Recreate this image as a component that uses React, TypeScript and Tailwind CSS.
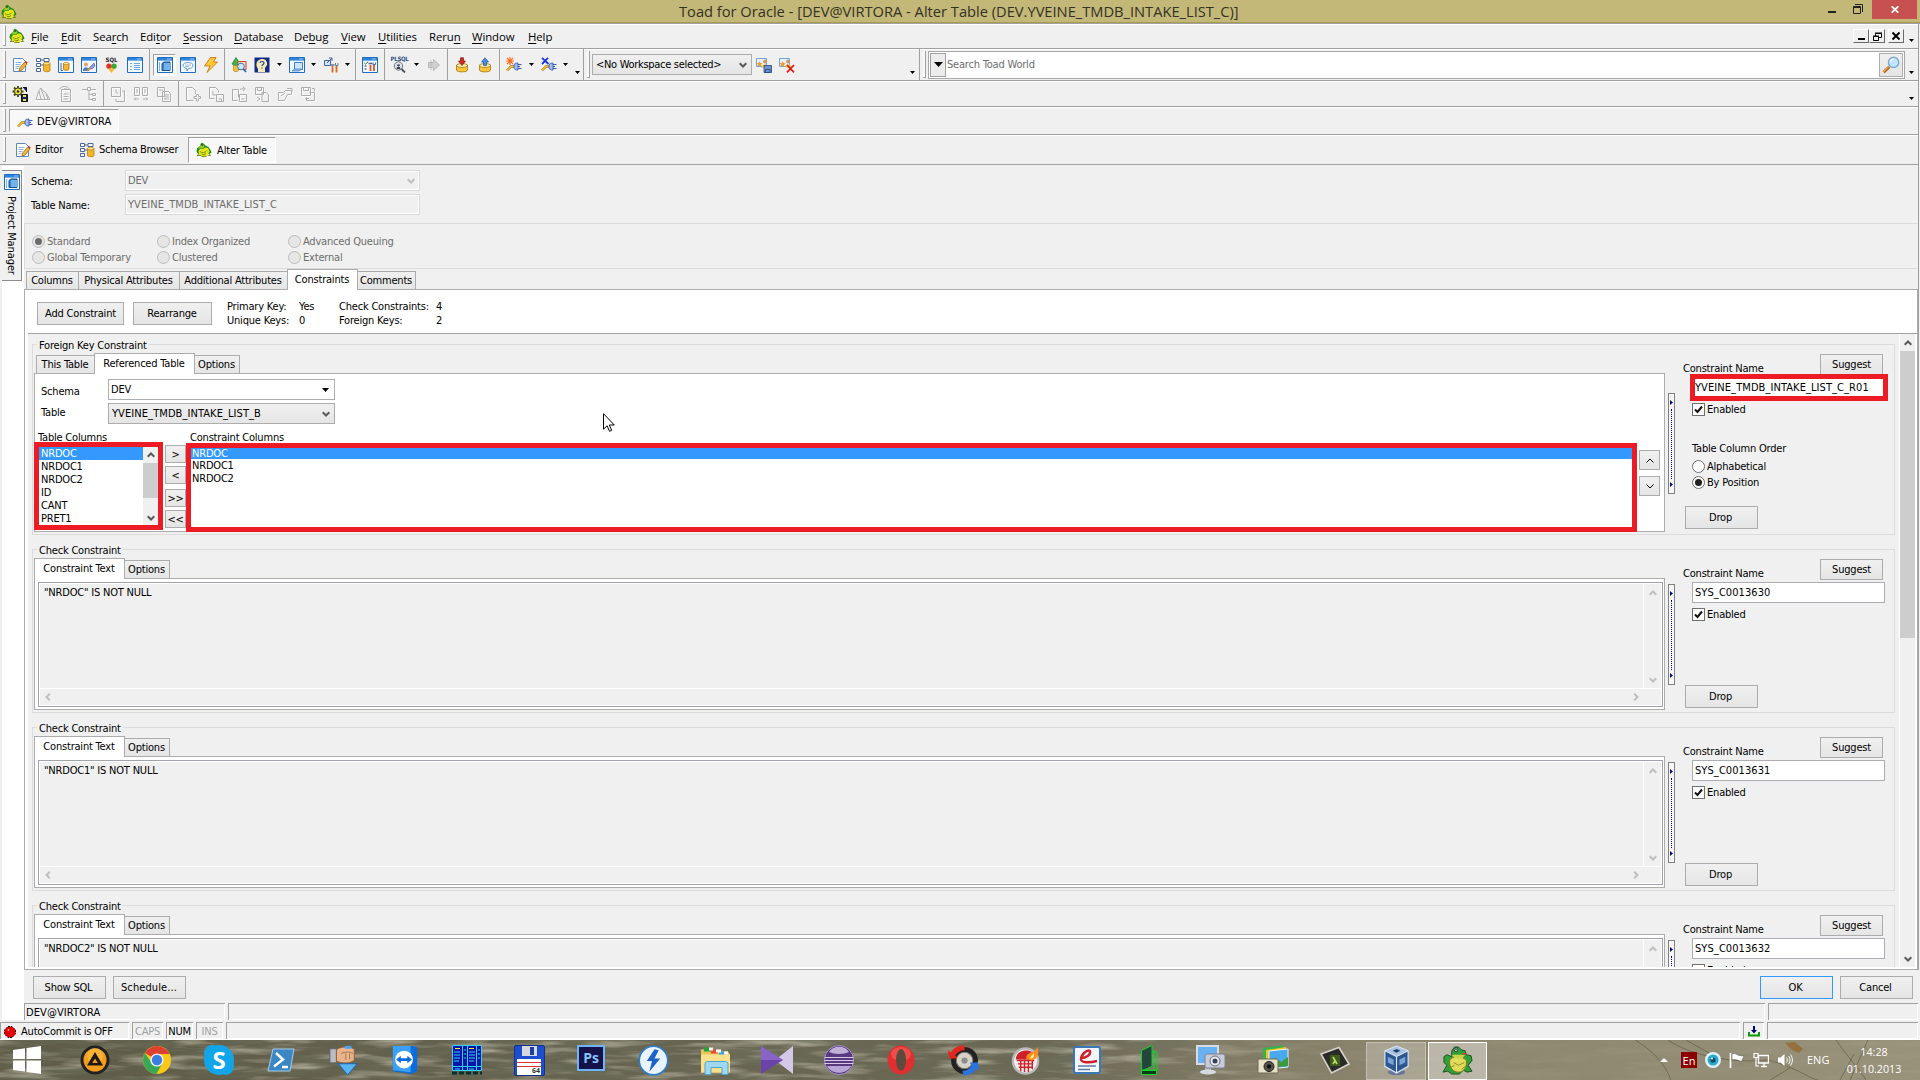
import React from 'react';

type Kids = { children?: React.ReactNode };

/* ---------- small drawing helpers ---------- */

function Svg({ s = 16, children, vb = '0 0 16 16' }: Kids & { s?: number; vb?: string }) {
  return (
    <svg width={s} height={s} viewBox={vb} className="block shrink-0" fill="none">
      {children}
    </svg>
  );
}

const Tri = ({ w = 5, c = '#000' }: { w?: number; c?: string }) => (
  <svg width={w} height={Math.ceil(w / 2)} viewBox="0 0 10 6" preserveAspectRatio="none" className="block shrink-0">
    <path d="M0 0h10L5 6z" fill={c} />
  </svg>
);

const Chev = ({ d, c = '#5a5a5a' }: { d: 'up' | 'down' | 'left' | 'right'; c?: string }) => (
  <svg width="8" height="8" viewBox="0 0 8 8" className="block shrink-0" fill="none" stroke={c} strokeWidth="2">
    <path
      d={d === 'up' ? 'M.7 5.8 4 2.5l3.3 3.3' : d === 'down' ? 'M.7 2.2 4 5.5l3.3-3.3' : d === 'left' ? 'M5.8.7 2.5 4l3.3 3.3' : 'M2.2.7 5.5 4 2.2 7.3'}
    />
  </svg>
);

const Toad = () => (
  <Svg>
    <path d="M1 6.500 4 4l.8-2.500L6 .8 7.500 1.500 9.500 3.500l3 1.500 2 3 1 2.500-2 1.500H2L.5 9.500z" fill="#2a8a1c" />
    <path d="M4.500 3.500 7 2.500l1.500 2-1.500 2H2.500z" fill="#8fce2a" />
    <path d="M2.500 9 4 7h3l2-1.500 3 .5 1.500 3-1.500 4.500-3 1H6L3 12.500z" fill="#e6e619" />
    <path d="M3 12.500 1 13.500h4M5.500 14.500h5M12 13.500h2.500l-1.500-2M4 9.500c2 1.500 5 1.500 7-1M5.500 12l2.500.8 2-1.300" stroke="#58780a" strokeWidth=".8" />
    <path d="M5.500 2.500h1.200v1.200H5.500z" fill="#111" />
  </Svg>
);

const Doc = () => (
  <Svg>
    <path d="M1.5 1.5h9l3 3v10h-12z" fill="#fff" stroke="#5d87bd" />
    <path d="M3.5 5.5h6m-6 2h5m-5 2h4m-4 2h3" stroke="#8fb3de" />
    <path d="m7 14 .7-3 5-6 2.3 2-5 6z" fill="#f0b53a" stroke="#a2661a" strokeWidth=".8" />
    <path d="m12.7 5 1-1.2 2 1.8-.9 1.3z" fill="#d33b30" />
  </Svg>
);

const Schema = () => (
  <Svg>
    <path d="M1.5 1.5h4v3h-4zm0 5h4v3h-4zm0 5h4v3h-4zM5.5 3h4M5.5 8h3" fill="#fff" stroke="#49699e" />
    <path d="M9 1.5h5v3H9z" fill="#fff" stroke="#49699e" />
    <path d="M8.5 6.5v7c0 1.6 6.5 1.6 6.5 0v-7z" fill="#f3b62c" stroke="#b47d12" strokeWidth=".8" />
    <ellipse cx="11.7" cy="6.6" rx="3.2" ry="1.4" fill="#fde48c" stroke="#b47d12" strokeWidth=".7" />
  </Svg>
);

const Win = ({ children }: Kids) => (
  <Svg>
    <path d="M.5.5h15v15H.5z" fill="#f2f8ff" stroke="#1f6cc0" />
    <path d="M1 1h14v2.6H1z" fill="#2c84dd" />
    <path d="M10.5 2h1m1 0h1" stroke="#fff" />
    {children}
  </Svg>
);

const WinDb = () => (
  <Win>
    <path d="M5.5 6.5v5.8c0 1.4 5.5 1.4 5.5 0V6.5z" fill="#f3b62c" stroke="#a9750f" strokeWidth=".8" />
    <ellipse cx="8.2" cy="6.5" rx="2.7" ry="1.2" fill="#fde48c" stroke="#a9750f" strokeWidth=".6" />
    <path d="M3 6v7.5h2" stroke="#49699e" />
  </Win>
);
const WinUser = () => (
  <Win>
    <circle cx="5" cy="7.5" r="2" fill="#e0a36b" />
    <path d="M1.8 14c0-5 6.4-5 6.4 0z" fill="#4f7fc9" />
    <path d="m7 12 3-3 3-3 1 3-3 3z" fill="#8f9fd6" stroke="#4a5da8" strokeWidth=".6" />
    <path d="m6 14 3-3" stroke="#e28d1e" strokeWidth="1.6" />
  </Win>
);
const WinList = () => (
  <Win>
    <path d="M3 6.5h2m-2 3h2m-2 3h2M7 6.5h6M7 8.5h6M7 10.5h6M7 12.5h6" stroke="#69a7e6" />
  </Win>
);
const WinBook = () => (
  <Win>
    <path d="M5 6.5 7 5h6v8.5H5z" fill="#3d83c9" stroke="#174f8c" />
    <path d="M7 6h6v7H7z" fill="#74b2ea" />
    <path d="M2.5 5v9" stroke="#79b4ed" />
  </Win>
);
const WinChat = () => (
  <Win>
    <path d="M3 8.5c0-4 10-4 10 0 0 2-2 3-4.5 3L7 14v-2.6C4.5 11 3 10 3 8.5z" fill="#fff" stroke="#6b95c8" />
    <path d="M5 8h6M5 9.5h4" stroke="#9fbce0" />
  </Win>
);
const WinCopy = () => (
  <Win>
    <path d="M5.5 5.5h8v7h-8z" fill="#cfe5fb" stroke="#3c7fc4" />
    <path d="m3 14 2.5-2h7l-2 2z" fill="#8dbdf0" stroke="#3c7fc4" strokeWidth=".7" />
  </Win>
);
const WinTools = () => (
  <Win>
    <path d="M2.5 9h2m-2 3h2" stroke="#333" />
    <path d="m2.300 6 1.200 1.200L6 4.800" stroke="#1a8a2b" />
    <path d="M8.500 8v6M12 8v6" stroke="#d8572a" strokeWidth="1.800" />
    <path d="M6.500 6.500h4" stroke="#5b6b80" strokeWidth="1.600" />
    <path d="M11 5.500v2h2.500v-2" stroke="#4b6fa8" />
  </Win>
);
const SqlHeart = () => (
  <div className="flex w-4 flex-col items-center">
    <span className="text-[6px] leading-[6px] font-bold tracking-normal text-[#222]">SQL</span>
    <svg width="11" height="10" viewBox="0 0 11 10" className="block">
      <circle cx="3" cy="3.2" r="2.7" fill="#e53227" />
      <circle cx="8" cy="3.2" r="2.7" fill="#35a935" />
      <path d="M2 5.5h7L5.5 10z" fill="#f5b82c" />
    </svg>
  </div>
);
const Bolt = () => (
  <Svg>
    <path d="M7.500.5h5.500L10.500 5H14.500L4 15.500 7 9H1.500z" fill="#ffc83a" stroke="#c07a12" strokeWidth=".9" />
  </Svg>
);
const Shapes = () => (
  <Svg>
    <path d="M5 .5 8.500 6 5 9 1 7z" fill="#3db54a" stroke="#1d7a2a" strokeWidth=".7" />
    <path d="M7 4.500h8v8H7z" fill="#f6d9cb" stroke="#c9462b" />
    <path d="M2.500 8.500v5c0 1.500 5 1.500 5 0v-5z" fill="#efc13d" stroke="#a9750f" strokeWidth=".6" />
    <circle cx="10" cy="9.500" r="3.300" fill="#cfe8fb" stroke="#3f79b9" />
    <path d="m12.300 12 2.700 3" stroke="#2f6ab0" strokeWidth="1.800" />
  </Svg>
);
const Head = () => (
  <Svg>
    <path d="M.5.5h15v15H.5z" fill="#122c83" />
    <path d="M4 15v-3L2.5 9C2 4 5 2 8.5 2 12 2 13.5 5 13 8l-2 3v4z" fill="#f6e8b4" />
    <path d="M6 6c0-2 4-2 4 0 0 1.5-2 1.5-2 3m0 1.5v1" stroke="#24408f" strokeWidth="1.2" />
  </Svg>
);
const Gearish = () => (
  <Svg>
    <path d="M1.500 3.500h6v5h-6z" fill="#d6e5f7" stroke="#3e64a7" />
    <path d="M4 6 9 1m-3 0h3v3" stroke="#3e64a7" />
    <path d="M9.500 9v6.500m4-6.500v6.500" stroke="#d8672a" strokeWidth="1.800" />
    <path d="M7.500 8h4" stroke="#6a7d99" strokeWidth="1.600" />
    <path d="M12.500 6v2.500h2.500V6" stroke="#6a7d99" />
  </Svg>
);
const PlSql = () => (
  <div className="flex w-4 flex-col items-center">
    <span className="text-[6px] leading-[5px] font-bold tracking-[-0.3px] text-[#2f4f86]">PLSQL</span>
    <svg width="13" height="12" viewBox="0 0 13 12" className="block" fill="none">
      <circle cx="5.5" cy="5" r="4.2" fill="#dbe3ea" stroke="#6d7781" />
      <path d="m8.5 8 3.5 3.5" stroke="#4a4f55" strokeWidth="1.8" />
      <path d="M3.5 8c0-3.5 4-3.5 4 0zM4.2 3.5h2.6V5H4.2z" fill="#36404a" />
    </svg>
  </div>
);
const Play = () => (
  <Svg>
    <path d="M2.5 5.500h5v-3l6 5.500-6 5.500v-3h-5z" fill="#cfcfcf" stroke="#b9b9b9" />
    <path d="M5 3v10" stroke="#bdbdbd" />
  </Svg>
);
const Disk = ({ up }: { up?: boolean }) => (
  <Svg>
    <path d="M2.5 8v5c0 2.5 11 2.5 11 0V8z" fill="#f7c63b" stroke="#a8740e" strokeWidth=".8" />
    <ellipse cx="8" cy="8.5" rx="5.5" ry="2" fill="#fdeeb0" stroke="#a8740e" strokeWidth=".8" />
    {up ? (
      <path d="M6.5 8.5V5h-2L8 .8 11.5 5h-2v3.5z" fill="#4b8fe0" stroke="#1d4f95" strokeWidth=".7" />
    ) : (
      <path d="M6.5.8V4h-2L8 8.5 11.5 4h-2V.8z" fill="#cf2b25" stroke="#861410" strokeWidth=".7" />
    )}
  </Svg>
);
const Plug = ({ mark }: { mark?: 'star' | 'x' }) => (
  <Svg>
    {mark === 'star' && <path d="M1 1l6 6m0-6L1 7m3-7v8M0 4h8" stroke="#ff6b1c" strokeWidth="1.2" />}
    {mark === 'x' && <path d="M1 .8 7.5 7M7 .8 1 7" stroke="#1636e0" strokeWidth="1.8" />}
    <path d="m1 13.5 4-4h3" stroke="#b57a12" strokeWidth="2.4" />
    <path d="m1 13.5 4-4h3" stroke="#f3c238" strokeWidth="1.2" />
    <path d="M8 8.5c0-2 2-2.500 4-2.500v7c-2 0-4-.5-4-2.500z" fill="#9fbdf0" stroke="#3a59a8" strokeWidth=".9" />
    <path d="M12 7.5h3.500M12 11.500h3.500M12 9.500h2" stroke="#3a59a8" />
  </Svg>
);
const Ws = ({ x }: { x?: boolean }) => (
  <Svg>
    <path d="M.5 1.5h10v8H.5z" fill="#e8f2fd" stroke="#6fa0da" />
    <path d="m3.5 4 1 2 2 .2L5 7.700l.5 2-2-1-2 1 .5-2L.8 6.200l1.900-.2z" fill="#f29b2e" />
    <circle cx="9" cy="4.5" r="2" fill="#d69a5d" />
    <path d="M5.8 10.5c0-4.500 6.400-4.500 6.400 0z" fill="#f3c14a" />
    {x ? <path d="m8 8 7 7.300M15 8l-7 7.300" stroke="#e11b12" strokeWidth="1.8" /> : <path d="M8 8.500h7.500v7H8zM9.500 12.500H14v3H9.500z" fill="#6f92cf" stroke="#27457f" strokeWidth=".8" />}
  </Svg>
);
const Lens = () => (
  <Svg s={18}>
    <path d="m1.5 14.5 5-5" stroke="#b86416" strokeWidth="2.6" />
    <path d="m1.2 14 4.8-4.800" stroke="#f3a24c" strokeWidth="1" />
    <circle cx="10.3" cy="5.7" r="4.6" fill="#bfe6fb" stroke="#7aa7d6" strokeWidth="1.2" />
    <path d="M7.5 5c.5-1.700 2-2.300 3.300-2.200" stroke="#fff" strokeWidth="1.2" />
  </Svg>
);
const GearSave = () => (
  <Svg>
    <path d="M6 0v11M.5 5.500h11M2 1.500l8 8m0-8-8 8" stroke="#4a4a00" strokeWidth="1.8" />
    <circle cx="6" cy="5.5" r="3.6" fill="#e8e337" stroke="#333" />
    <circle cx="6" cy="5.5" r="1.2" fill="#222" />
    <path d="M11 1.500h3.500V6M9.500 8.500h6v7h-6z" stroke="#111" fill="#17235e" />
    <path d="M11 13h3v2h-3zM11 9h3v2h-3z" fill="#e8e337" />
  </Svg>
);

const GREY = [
  'M1 13.500 4 4.500 6 2l2 3 3 2 4 6.500zM4 5l2 8M6 3l4 10M11 8l2 5',
  'M3.5 3.500h9v12h-9zM5.500 8h5m-5 2.500h5m-5 2.500h5M1 3.500c3-4 8-4 11 0M6 3h3',
  'M1 3.500h5M10 3.500h5M6.500 1.500h3v3h-3zM8 5v9M8 8.500h3m-3 5h3M11.500 7.500h3v2h-3zM11.500 12.500h3v2h-3z',
  'M1.5 1.500h9v9h-9zM6 3.500v3l2 1M12 5h2.500v10.500H6V13',
  'M1.500 1.500h5v8h-5zM9.500 1.500h5v8h-5zM3 4h2m-2 2h2m6-2h2m-2 2h2M1 13h5m4 0h5M3 11.500 1.500 13 3 14.500M13 11.500l1.500 1.500-1.500 1.500',
  'M1.500 1.500h7v9h-7zM6.500 5.500h6l2 2v8h-8zM8 9h5m-5 2h5m-5 2h5M3 4h4',
  'M10.500 8V4.500l-3-3h-6v13h7M11.500 8.500h2v2h2v2h-2v2.500h-2v-2.500H9v-2h2.500z',
  'M1.500 1.500h6l3 3v2M1.500 1.500v11h5M8.500 8.500h7v7h-7zM10.500 13h3v2.500M5 5v4h3',
  'M1.500 3.500h6v8M1.500 3.500v11h5M8.500 8.500h7v7h-7zM10.500 13h3M9 3h5m-2-2 2.500 2-2.500 2',
  'M1.500 1.500h8v7h-8zM3.500 1.500v3h4v-3M8 6.500h4l2.500 2.500v6.500H8zM3 11l3 2-3 2',
  'M1.500 6.500h5l2-2h6v4h-4l-3 6h-6zM10 2.500h5v3M4 10l4-3',
  'M1.500 1.500h9v8h-9zM3.500 1.500v3h5v-3M5 12.500h4M9.500 6.500h5v8h-8v-3M12 2.500h2.500v3',
];
const Grey = ({ i }: { i: number }) => (
  <Svg>
    <path d={GREY[i]} transform="translate(.7 .7)" stroke="#fff" />
    <path d={GREY[i]} stroke="#adadad" />
  </Svg>
);

/* ---------- toolbar parts ---------- */

const Slot = ({ children, w = 'w-[23px]' }: Kids & { w?: string }) => <div className={`flex h-full ${w} shrink-0 items-center justify-center`}>{children}</div>;
const Sep = ({ w = 'w-[5px]' }: { w?: string }) => (
  <div className={`flex h-full ${w} shrink-0 justify-center`}>
    <div className="w-px bg-[#a0a0a0]" />
  </div>
);
const Drop = ({ w = 'w-[11px]' }: { w?: string }) => (
  <Slot w={w}>
    <Tri />
  </Slot>
);
const Grip = () => <div className="my-[2px] ml-[3px] w-[3px] shrink-0 self-stretch border-r border-b border-[#a0a0a0] bg-[#f8f8f8]" />;
const Row = ({ children, h }: Kids & { h: string }) => (
  <div className={`flex ${h} w-[1919px] shrink-0 items-center border-r border-b border-[#a0a0a0] shadow-[inset_0_1px_0_#fff]`}>{children}</div>
);
const Corner = () => (
  <div className="flex h-full w-[9px] flex-col justify-end pb-[6px]">
    <Tri />
  </div>
);

const MENU: [string, number, number][] = [
  ['File', 0, 30],
  ['Edit', 0, 32],
  ['Search', 3, 47],
  ['Editor', 3, 43],
  ['Session', 0, 51],
  ['Database', 0, 60],
  ['Debug', 2, 47],
  ['View', 0, 37],
  ['Utilities', 0, 51],
  ['Rerun', 4, 43],
  ['Window', 0, 56],
  ['Help', 0, 40],
];

/* ---------- form parts ---------- */

const Btn = ({ children, cls }: Kids & { cls: string }) => (
  <button className={`flex shrink-0 items-center justify-center border bg-linear-to-b from-[#f0f0f0] to-[#e5e5e5] pt-px ${cls}`}>{children}</button>
);
const Id = ({ children }: Kids) => <span className="tracking-[0.08px]">{children}</span>;

const Radio = ({ children, on, off }: Kids & { on?: boolean; off?: boolean }) => (
  <div className={`flex h-4 items-center gap-[2px] ${off ? 'text-[#6d6d6d]' : ''}`}>
    <span className={`flex size-[13px] items-center justify-center rounded-full border ${off ? 'border-[#bcbcbc] bg-[#e6e6e6]' : 'border-[#707070] bg-white'}`}>
      {on && <span className={`size-[7px] rounded-full ${off ? 'bg-[#6d6d6d]' : 'bg-[#212121]'}`} />}
    </span>
    <span className="pt-px">{children}</span>
  </div>
);

const Tab = ({ children, on, w }: Kids & { on?: boolean; w: string }) => (
  <div
    className={`-mr-px flex shrink-0 items-center justify-center border border-b-0 border-[#acacac] pr-px ${w} ${on ? 'relative z-10 -mb-px h-[21px] bg-white pb-px' : 'h-[18px] bg-linear-to-b from-[#f0f0f0] to-[#e5e5e5] pt-px'}`}
  >
    {children}
  </div>
);

const Splitter = ({ mt }: { mt: string }) => (
  <div className={`ml-[3px] flex h-[101px] w-[7px] shrink-0 flex-col items-center justify-between border border-[#808080] bg-[#f7f7f7] py-[6px] ${mt}`}>
    <svg width="3" height="5" viewBox="0 0 3 5">
      <path d="M0 0l3 2.500L0 5z" fill="#000080" />
    </svg>
    <div className="h-[70px] w-0 border-l border-dotted border-[#000080]" />
    <svg width="3" height="5" viewBox="0 0 3 5">
      <path d="M0 0l3 2.500L0 5z" fill="#000080" />
    </svg>
  </div>
);

function Side({ name, foreign }: { name: string; foreign?: boolean }) {
  return (
    <div className="flex w-[218px] shrink-0 flex-col pt-px">
      <div className="flex h-[21px] justify-between pr-[10px] pl-[8px]">
        <span className="mt-[7px] leading-[16px]">Constraint Name</span>
        <Btn cls="h-[21px] w-[63px] border-[#acacac]">Suggest</Btn>
      </div>
      {foreign ? (
        <div className="relative -mt-px ml-[15px] flex h-[27px] w-[198px] items-center border-5 border-[#ed1c24] bg-white">
          <Id>{name}</Id>
        </div>
      ) : (
        <div className="mt-[2px] ml-[17px] flex h-[21px] w-[193px] items-center border border-[#abadb3] bg-white pl-[2px]">
          <Id>{name}</Id>
        </div>
      )}
      <div className={`ml-[17px] flex h-[13px] items-center gap-[2px] ${foreign ? 'mt-[2px]' : 'mt-[5px]'}`}>
        <span className="flex size-[13px] items-center justify-center border border-[#707070] bg-white">
          <svg width="9" height="9" viewBox="0 0 9 9" fill="none">
            <path d="M1 4.500 3.500 7 8 1.500" stroke="#111" strokeWidth="2" />
          </svg>
        </span>
        <span className="pt-px">Enabled</span>
      </div>
      {foreign && (
        <div className="mt-[25px] ml-[17px] flex flex-col">
          <span className="mb-px leading-[16px]">Table Column Order</span>
          <Radio>Alphabetical</Radio>
          <Radio on>By Position</Radio>
        </div>
      )}
      <Btn cls={`ml-[10px] h-[23px] w-[73px] border-[#acacac] pr-[2px] ${foreign ? 'mt-[16px]' : 'mt-[64px]'}`}>Drop</Btn>
    </div>
  );
}

function Group({ title, h, children }: Kids & { title: string; h: string }) {
  return (
    <section className={`ml-1 flex w-[1863px] shrink-0 flex-col border border-[#dcdcdc] ${h}`}>
      <div className="-mt-[7px] ml-[4px] h-[14px] shrink-0 self-start bg-[#f0f0f0] px-[2px] leading-[16px]">{title}</div>
      <div className="mt-px ml-px flex">{children}</div>
    </section>
  );
}

function Check({ text, name }: { text: string; name: string }) {
  return (
    <Group title="Check Constraint" h="h-[164px]">
      <div className="w-[1631px] shrink-0">
        <div className="flex h-[20px] items-end">
          <Tab on w="w-[91px]">
            Constraint Text
          </Tab>
          <Tab w="w-[46px]">Options</Tab>
        </div>
        <div className="h-[132px] border border-[#acacac] bg-white p-[3px]">
          <div className="flex h-[125px] w-[1625px] flex-col border border-[#a0a3aa] bg-[#f0f0f0] shadow-[inset_0_0_0_1px_#fff]">
            <div className="flex h-[105px]">
              <div className="flex-1 pt-[3px] pl-[5px] leading-[14px]">{text}</div>
              <div className="flex w-[19px] flex-col items-center justify-between border-l border-white pt-[6px] pb-[4px]">
                <Chev d="up" c="#bfbfbf" />
                <Chev d="down" c="#bfbfbf" />
              </div>
            </div>
            <div className="flex h-[17px] items-center justify-between border-t border-white pr-[22px] pl-[5px]">
              <Chev d="left" c="#bfbfbf" />
              <Chev d="right" c="#bfbfbf" />
            </div>
          </div>
        </div>
      </div>
      <Splitter mt="mt-[26px]" />
      <Side name={name} />
    </Group>
  );
}

function Foreign() {
  return (
    <Group title="Foreign Key Constraint" h="h-[191px]">
      <div className="w-[1631px] shrink-0">
        <div className="flex h-[20px] items-end pl-[2px]">
          <Tab w="w-[59px]">This Table</Tab>
          <Tab on w="w-[101px]">
            Referenced Table
          </Tab>
          <Tab w="w-[46px]">Options</Tab>
        </div>
        <div className="h-[159px] border border-[#acacac] bg-white pt-[5px]">
          <div className="flex h-[21px] pl-[6px]">
            <span className="w-[67px] pt-[6px] leading-[14px]">Schema</span>
            <div className="flex w-[227px] items-center justify-between border border-[#abadb3] pr-[5px] pl-[2px]">
              DEV
              <Tri w={7} />
            </div>
          </div>
          <div className="mt-[3px] flex h-[21px] pl-[6px]">
            <span className="w-[67px] pt-[3px] leading-[14px]">Table</span>
            <div className="flex w-[227px] items-center justify-between border border-[#acacac] bg-linear-to-b from-[#f0f0f0] to-[#e5e5e5] pt-px pr-[4px] pl-[3px]">
              <Id>YVEINE_TMDB_INTAKE_LIST_B</Id>
              <Chev d="down" />
            </div>
          </div>
          <div className="mt-[6px] flex h-[12px] pl-[3px] leading-[16px]">
            <span className="w-[152px]">Table Columns</span>
            <span>Constraint Columns</span>
          </div>
          <div className="-ml-px flex items-start">
            <div className="relative flex h-[88px] w-[129px] border-5 border-[#ed1c24] bg-white">
              <div className="w-[104px]">
                {['NRDOC', 'NRDOC1', 'NRDOC2', 'ID', 'CANT', 'PRET1'].map((c, i) => (
                  <div key={c} className={`h-[13px] pl-[2px] leading-[13px] ${i === 0 ? 'h-[12px] bg-[#3399ff] text-white' : ''}`}>
                    {c}
                  </div>
                ))}
              </div>
              <div className="flex w-[15px] flex-col items-center bg-[#f0f0f0]">
                <div className="flex h-4 items-center">
                  <Chev d="up" />
                </div>
                <div className="h-[35px] w-full bg-[#cdcdcd]" />
                <div className="mt-auto flex h-[14px] items-center">
                  <Chev d="down" />
                </div>
              </div>
            </div>
            <div className="ml-[2px] flex w-[21px] flex-col pt-[3px]">
              <Btn cls="h-[18px] border-[#acacac]">&gt;</Btn>
              <Btn cls="mt-[3px] h-[18px] border-[#acacac]">&lt;</Btn>
              <Btn cls="mt-[5px] h-[18px] border-[#acacac]">&gt;&gt;</Btn>
              <Btn cls="mt-[3px] h-[18px] border-[#acacac]">&lt;&lt;</Btn>
            </div>
            <div className="relative mt-px h-[89px] w-[1451px] border-5 border-[#ed1c24] bg-white">
              {['NRDOC', 'NRDOC1', 'NRDOC2'].map((c, i) => (
                <div key={c} className={i === 0 ? 'h-[11px] bg-[#3399ff] pl-[1px] leading-[11px] text-white' : 'h-[13px] pl-[1px] leading-[14px]'}>
                  {c}
                </div>
              ))}
            </div>
            <div className="ml-[2px] flex w-[21px] flex-col gap-[6px] pt-[8px]">
              <Btn cls="h-[20px] border-[#acacac]">
                <svg width="8" height="5" viewBox="0 0 8 5" fill="none" stroke="#000">
                  <path d="M.5 4.500 4 1l3.500 3.500" />
                </svg>
              </Btn>
              <Btn cls="h-[20px] border-[#acacac]">
                <svg width="8" height="5" viewBox="0 0 8 5" fill="none" stroke="#000">
                  <path d="M.5.5 4 4 7.500.5" />
                </svg>
              </Btn>
            </div>
          </div>
        </div>
      </div>
      <Splitter mt="mt-[40px]" />
      <Side name="YVEINE_TMDB_INTAKE_LIST_C_R01" foreign />
    </Group>
  );
}

const Cell = ({ children, w }: Kids & { w: string }) => (
  <div className={`flex h-[17px] shrink-0 items-center border-t border-l border-[#a0a0a0] pt-px shadow-[inset_-1px_-1px_0_#fff] ${w}`}>{children}</div>
);

/* ---------- taskbar icons ---------- */

const Aimp = () => (
  <Svg s={30} vb="0 0 30 30">
    <circle cx="15" cy="15" r="14.5" fill="#222" />
    <circle cx="15" cy="15" r="11.5" fill="#f59c1a" />
    <circle cx="15" cy="11" r="8" fill="#ffc04a" opacity=".6" />
    <path d="M15 7 7 20.500h16z" fill="#1d1a16" />
    <path d="m15 13.500-2.800 4.500h5.600z" fill="#f59c1a" />
  </Svg>
);
const Chrome = () => (
  <Svg s={30} vb="0 0 30 30">
    <circle cx="15" cy="15" r="14" fill="#fbc816" />
    <path d="M15 15 2.900 8A14 14 0 0 1 27.100 8L27 9H15z" fill="#dd4031" />
    <path d="M2.900 8A14 14 0 0 0 14.500 29l5.500-10-5 1-6-3z" fill="#3aa757" />
    <circle cx="15" cy="15" r="6.6" fill="#f2f2f2" />
    <circle cx="15" cy="15" r="5.2" fill="#3b7de0" />
  </Svg>
);
const Skype = () => (
  <div className="relative flex size-[30px] items-center justify-center rounded-full bg-[#12a5e8]">
    <span className="absolute top-0 left-0 size-[17px] rounded-full bg-[#12a5e8]" />
    <span className="absolute right-0 bottom-0 size-[17px] rounded-full bg-[#12a5e8]" />
    <span className="relative text-[24px] leading-none font-bold text-white">S</span>
  </div>
);
const PShell = () => (
  <Svg s={28} vb="0 0 28 24">
    <path d="M6 1h21l-4 22H1z" fill="#3b87c4" stroke="#a9cbe6" />
    <path d="m9 5 7 6.500L7 18.500M15 19h6" stroke="#fff" strokeWidth="2.4" />
  </Svg>
);
const Hand = () => (
  <Svg s={30} vb="0 0 30 32">
    <path d="M1 4h7v15H1z" fill="#b9bcc2" stroke="#5d6066" />
    <path d="M8 5c4-4 17-4 19 0v11c-3 4-14 4-19 1z" fill="#e9b48c" stroke="#94603b" />
    <path d="M13 9c4-2 9-2 13 0M18 9v7m4-7v6" stroke="#a87349" />
    <path d="M17 1h7v3h-7z" fill="#4aa3ee" />
    <path d="M10 20h20L20 32z" fill="#58b4f5" stroke="#1b62a8" />
  </Svg>
);
const TeamV = () => (
  <Svg s={30} vb="0 0 30 32">
    <path d="M2 1h22l4 2v25l-6 3L2 28z" fill="#0d6be0" />
    <path d="M2 1h19v28L2 27z" fill="#3ba0f2" />
    <circle cx="14" cy="15.5" r="9.5" fill="#fff" />
    <path d="m5.500 15.500 5-4v2.500h7v-2.500l5 4-5 4V17h-7v2.500z" fill="#0d6be0" />
  </Svg>
);
const Servers = () => (
  <Svg s={30} vb="0 0 30 30">
    <path d="M.5.5h29v25H.5z" fill="#0b12a8" stroke="#29d6f0" />
    <path d="M10.500 0v26M15.500 0v26M24.500 0v26M0 21.500h30" stroke="#29d6f0" />
    <path d="M3 3.500h5m9 0h5" stroke="#f6ee2a" />
    <path d="M2 7h6M2 10h6M2 13h6M2 16h5M17 7h6m-6 3h6m-6 3h6m-6 3h5M12 5h2m-2 4h2m-2 4h2m12-8h2m-2 4h2m-2 4h2M3 24h5m9 0h5" stroke="#29d6f0" />
    <path d="M0 28h30" stroke="#07302f" strokeWidth="3" strokeDasharray="5 2" />
  </Svg>
);
const Floppy = () => (
  <div className="flex size-[31px] flex-col items-center rounded-[2px] border border-[#123187] bg-[#1c4fd0]">
    <div className="h-[10px] w-[15px] bg-[#d7d9de] pl-[8px]">
      <div className="mt-[1px] h-[8px] w-[4px] bg-[#1c3f9d]" />
    </div>
    <div className="mt-[3px] flex h-[16px] w-[24px] flex-col items-end bg-white pt-[3px]">
      <div className="h-px w-full bg-[#d33]" />
      <div className="mt-[3px] h-px w-full bg-[#d33]" />
      <span className="pr-[1px] text-[7px] leading-[8px] font-bold text-[#333]">64</span>
    </div>
  </div>
);
const Ps = () => (
  <div className="mb-[4px] flex h-[26px] w-[28px] items-center justify-center border-2 border-[#6cb4f7] bg-[#15124a] text-[14px] font-bold text-[#85c3fb]">Ps</div>
);
const Daemon = () => (
  <Svg s={31} vb="0 0 30 30">
    <circle cx="15" cy="15" r="13.8" fill="#e9f3fd" stroke="#2c7cc9" strokeWidth="1.6" />
    <path d="M16 4 8.500 15.500h5L11 26l10.500-13H16L20 5z" fill="#1c63cc" />
  </Svg>
);
const Folder = () => (
  <Svg s={31} vb="0 0 31 30">
    <path d="M1 4h8l1 2h18l2 3v18H1z" fill="#e9c65c" />
    <path d="M4 2h6v4H4z" fill="#23a33a" />
    <path d="M11 4h7v4h-7z" fill="#e9492b" />
    <path d="M19 6h7v4h-7z" fill="#36a0e8" />
    <path d="M9 2h4v3H9zM16 4h5v3h-5zM24 6h4v3h-4z" fill="#fff" />
    <path d="M1 9h29v18H1z" fill="#f9e08a" />
    <path d="M5 29V18.500c0-1.500 1-2.500 2.500-2.500h18c1.500 0 2.500 1 2.500 2.500V29h-6v-7H11v7z" fill="#9fd8f3" stroke="#4aa5d4" />
  </Svg>
);
const Vs = () => (
  <Svg s={32} vb="0 0 32 28">
    <path d="M32 0v28L14 14z" fill="#d3c8e6" />
    <path d="M0 0v28l22-14z" fill="#6a44a8" />
    <path d="M0 0v14h22z" fill="#8963c6" />
  </Svg>
);
const Eclipse = () => (
  <Svg s={30} vb="0 0 30 30">
    <circle cx="15" cy="15" r="14.5" fill="#56397f" stroke="#a691c4" />
    <path d="M5 7C9 0 21 0 25 7c-5 2.500-15 2.500-20 0z" fill="#bfb0d8" />
    <path d="M.5 12.500h29M.5 15.500h29M.5 18.500h29" stroke="#d6c9ea" strokeWidth="1.2" />
    <path d="M3 21h24c-4 9-20 9-24 0z" fill="#b9a4d8" />
  </Svg>
);
const Opera = () => (
  <Svg s={30} vb="0 0 30 30">
    <ellipse cx="15" cy="15" rx="13.5" ry="14.5" fill="#e02f2f" />
    <ellipse cx="15" cy="9" rx="10" ry="7" fill="#ff6a62" opacity=".5" />
    <ellipse cx="15" cy="15" rx="5" ry="11" fill="#5c4a3c" />
  </Svg>
);
const Sync = () => (
  <Svg s={31} vb="0 0 30 30">
    <circle cx="16" cy="15" r="13" fill="#222" />
    <circle cx="16" cy="15" r="8" fill="#d8d2c4" stroke="#777" />
    <circle cx="16" cy="15" r="3" fill="#8c8c8c" />
    <path d="M0 5l1 8h8L7 10c2-3 5-5 9-5V.5C11 0 6 2 3 7z" fill="#e3271e" />
    <path d="M30 24l-1-7h-8l2 3c-2 3-5 5-9 5l1 4.500c6 0 9-2 12-6z" fill="#2b74e0" />
  </Svg>
);
const Burn = () => (
  <Svg s={29} vb="0 0 30 30">
    <circle cx="15" cy="15.5" r="13" fill="#f5eeee" stroke="#b9b9b9" strokeWidth="2.4" />
    <path d="M5 14C5 3 22 2 25 10l-4 4z" fill="#cd2029" />
    <path d="M6 15h18M7 18.500h16M8 22h14M10 14v12m4-12v13m4-13v13m4-12v9" stroke="#cd2029" strokeWidth="1.5" />
    <path d="M16 13c-1-5 4-5 5-7 1 2 4 0 6-5 3 7 0 13-6 14z" fill="#ff8d1c" />
    <path d="M20 13c0-3 3-3 3-6 2 4 0 6-3 6z" fill="#fff08a" />
  </Svg>
);
const Sign = () => (
  <Svg s={28} vb="0 0 28 28">
    <rect x="1" y="1" width="26" height="26" rx="2" fill="#f4f7fb" stroke="#3a78b8" strokeWidth="2" />
    <path d="M8 12c5 0 10-3 9-7-3-2-9 4-9 8 0 4 8 4 16 2" stroke="#d0202a" strokeWidth="2.4" />
    <path d="M5 20h18M5 23.500h12" stroke="#5f7fa5" strokeWidth="1.6" />
  </Svg>
);
const Book = () => (
  <Svg s={30} vb="0 0 30 30">
    <path d="M7.500 5.500 18 .5v21L7.500 26z" fill="#24443c" stroke="#14d42a" />
    <path d="M18 7h5v18H8" stroke="#14d42a" />
    <path d="M7.500 25.500h15v4h-15zM20 5v20" fill="#0b3d14" stroke="#14d42a" />
  </Svg>
);
const CamPc = () => (
  <Svg s={30} vb="0 0 30 30">
    <path d="M1 1h21v18H1z" fill="#69b2f2" stroke="#d8dbe0" strokeWidth="2" />
    <path d="M9 20h6v5H9z" fill="#b8bcc4" />
    <ellipse cx="12" cy="27" rx="8" ry="2.5" fill="#d6d9df" />
    <rect x="9" y="9" width="20" height="14" rx="2" fill="#c9ccd8" stroke="#7d8191" />
    <circle cx="19" cy="16" r="5" fill="#e9ebf2" stroke="#666b80" />
    <circle cx="19" cy="16" r="2.5" fill="#39405c" />
  </Svg>
);
const CamPic = () => (
  <Svg s={32} vb="0 0 32 32">
    <path d="m6 4 20-3v18L6 21z" fill="#35b24a" />
    <path d="m9 6 20-3v18L9 23z" fill="#f0c61e" />
    <path d="m12 7 19-2v18l-19 2z" fill="#4aa8ee" stroke="#e9f2fa" />
    <path d="m12 20 7-6 5 4 7-5v9l-19 2z" fill="#3a9a3c" />
    <rect x="1" y="15" width="20" height="14" rx="1.5" fill="#e6e2c8" stroke="#6f6b53" />
    <circle cx="12" cy="22.5" r="5" fill="#55534a" stroke="#222" />
    <circle cx="12" cy="22.5" r="2.2" fill="#11120f" />
  </Svg>
);
const Film = () => (
  <Svg s={30} vb="0 0 30 30">
    <path d="m1 9 18-6.500L29 19 11.500 28z" fill="#2b2b27" stroke="#d5d3cb" strokeWidth="1.6" />
    <path d="M10 10h10v11H10z" fill="#415c1d" />
    <path d="m13 12 4 7m-1.500-4L13 19" stroke="#b5dd6c" strokeWidth="1.6" />
  </Svg>
);
const VBox = () => (
  <Svg s={31} vb="0 0 30 32">
    <ellipse cx="15" cy="28" rx="9" ry="3" fill="#3b58a0" opacity=".6" />
    <path d="m15 1 12 5v16l-12 7L3 22V6z" fill="#2b568f" />
    <path d="m15 1 12 5-12 6L3 6z" fill="#a9c2e0" stroke="#e6eef8" />
    <path d="M15 12v17M3 6v16l12 7 12-7V6" stroke="#dbe7f5" strokeWidth="1.2" />
    <path d="m6 12 6 3v6l-6-3zm18 0-6 3v6l6-3z" fill="#79a4d4" />
    <path d="m11 6 4-2 4 2-4 2z" fill="#1f3f70" />
  </Svg>
);
const BigToad = () => (
  <Svg s={31} vb="0 0 32 30">
    <path d="m1 27 4-7-3-3 0-6 3-2 5 2 0-6 3-4h4l3 3 4 1 1 4 5 1 1 5-4 5 4 6-5 1-4-2-4 4h-8l-4-3z" fill="#2fa03c" stroke="#0e3a14" strokeWidth=".8" />
    <path d="M8 15c1-5 14-5 17 0 1 6-2 12-8 12S7 21 8 15z" fill="#e2dc5b" stroke="#7c7a1c" />
    <path d="M10 9h14l-3 4h-8z" fill="#c9d24a" />
    <path d="M12 17l5 3 6-3M9 22l4-2m7 4 4-3" stroke="#8f8a26" />
    <circle cx="14.5" cy="4" r="2" fill="#fff" stroke="#123f18" />
    <circle cx="14.5" cy="4" r=".8" fill="#000" />
    <path d="M21 8h4" stroke="#d32" strokeWidth="1.5" />
  </Svg>
);

const TASKS = [Aimp, Chrome, Skype, PShell, Hand, TeamV, Servers, Floppy, Ps, Daemon, Folder, Vs, Eclipse, Opera, Sync, Burn, Sign, Book, CamPc, CamPic, Film];

function Wallpaper() {
  return (
    <svg width="1920" height="40" className="absolute inset-0 -z-10 block" preserveAspectRatio="none">
      <defs>
        <linearGradient id="sand" x1="0" x2="1" y1="0" y2="0">
          <stop offset="0" stopColor="#5e5b48" />
          <stop offset=".3" stopColor="#66634f" />
          <stop offset=".55" stopColor="#6c6956" />
          <stop offset=".64" stopColor="#827c66" />
          <stop offset=".72" stopColor="#8d856e" />
          <stop offset="1" stopColor="#99937c" />
        </linearGradient>
        <linearGradient id="fade" x1="0" x2="1" y1="0" y2="0">
          <stop offset="0" stopColor="#fff" />
          <stop offset=".58" stopColor="#fff" />
          <stop offset=".7" stopColor="#222" />
          <stop offset="1" stopColor="#222" />
        </linearGradient>
        <mask id="rippleMask">
          <rect width="1920" height="40" fill="url(#fade)" />
        </mask>
        <filter id="ripple" x="0" y="0" width="100%" height="100%">
          <feTurbulence type="fractalNoise" baseFrequency="0.014 0.11" numOctaves="4" seed="7" />
          <feColorMatrix values="0 0 0 0 .16  0 0 0 0 .17  0 0 0 0 .11  2.6 0 0 0 -1" />
        </filter>
        <filter id="shine" x="0" y="0" width="100%" height="100%">
          <feTurbulence type="fractalNoise" baseFrequency="0.016 0.13" numOctaves="3" seed="21" />
          <feColorMatrix values="0 0 0 0 .72  0 0 0 0 .69  0 0 0 0 .56  2.6 0 0 0 -1.25" />
        </filter>
      </defs>
      <rect width="1920" height="40" fill="url(#sand)" />
      <g mask="url(#rippleMask)">
        <rect width="1920" height="40" filter="url(#ripple)" opacity=".6" />
        <rect width="1920" height="40" filter="url(#shine)" opacity=".6" />
      </g>
      <g stroke="#5f543c" fill="none" opacity=".6">
        <path d="M1635 0c20 12 30 25 36 40M1668 0c20 14 60 24 100 20 30 8 44 20 50 20M1718 18l-32-18M1836 0c14 20 24 30 30 40M1868 0l-18 40M1770 40l20-12M1840 40l14-26" />
      </g>
      <path d="M1785 3l10-1 8 7-4 4-7-3z" fill="#94692e" opacity=".8" />
    </svg>
  );
}

/* ---------- page ---------- */

export default function App() {
  return (
    <div className="relative flex h-[1080px] w-[1920px] flex-col overflow-hidden bg-[#f0f0f0] font-['DejaVu_Sans_Condensed','DejaVu_Sans',sans-serif] text-[11px] leading-[14px] tracking-[-0.2px] whitespace-nowrap text-black">
      {/* title bar */}
      <div className="flex h-6 shrink-0 items-start border-b border-[#a0a0a0] bg-[#c3b877] shadow-[inset_0_-1px_0_#a99b52]">
        <div className="flex h-[23px] w-[679px] items-center pl-px">
          <Toad />
        </div>
        <div className="w-[1040px] pt-px font-['Open_Sans',sans-serif] text-[14.67px] leading-[21px] tracking-normal text-[#333126]">
          Toad for Oracle - [DEV@VIRTORA - Alter Table (DEV.YVEINE_TMDB_INTAKE_LIST_C)]
        </div>
        <div className="flex flex-1 items-start justify-end pr-[3px]">
          <div className="mt-[11px] mr-[17px] h-[2px] w-[8px] bg-[#222]" />
          <svg width="10" height="10" viewBox="0 0 10 10" className="mt-1 mr-[9px] block" fill="none" stroke="#222">
            <path d="M.5 2.500h7v7h-7zM2 .5h7.500V8" />
            <path d="M0 3.500h8" />
          </svg>
          <div className="flex h-[19px] w-[45px] items-center justify-center bg-[#c75050]">
            <svg width="8" height="7" viewBox="0 0 8 7" stroke="#fff" strokeWidth="1.7">
              <path d="m.7.3 6.600 6.400M7.300.3.7 6.700" />
            </svg>
          </div>
        </div>
      </div>

      {/* menu */}
      <Row h="h-[25px]">
        <Grip />
        <div className="mr-[6px] ml-[3px]">
          <Toad />
        </div>
        <div className="flex flex-1 pt-px font-['Open_Sans',sans-serif] text-[11.4px] tracking-[-0.1px]">
          {MENU.map(([m, u, w]) => (
            <span key={m} className="shrink-0" style={{ width: w }}>
              {m.slice(0, u)}
              <span className="underline underline-offset-2">{m[u]}</span>
              {m.slice(u + 1)}
            </span>
          ))}
        </div>
        <div className="flex pr-[5px]">
          <div className="flex h-[14px] w-4 items-end justify-center border border-t-white border-r-[#696969] border-b-[#696969] border-l-white pb-[2px]">
            <div className="h-[2px] w-[7px] bg-black" />
          </div>
          <div className="flex h-[14px] w-4 items-center justify-center border border-t-white border-r-[#696969] border-b-[#696969] border-l-white">
            <svg width="9" height="9" viewBox="0 0 9 9" fill="none" stroke="#000">
              <path d="M.5 4.500h5v4h-5zM0 4h6M2.500 4V1.500h6v4H6M2 1h7" />
            </svg>
          </div>
          <div className="ml-[3px] flex h-[14px] w-4 items-center justify-center border border-t-white border-r-[#696969] border-b-[#696969] border-l-white">
            <svg width="8" height="8" viewBox="0 0 8 8" stroke="#000" strokeWidth="2">
              <path d="m.5.5 7 7m0-7-7 7" />
            </svg>
          </div>
        </div>
        <Corner />
      </Row>

      {/* main toolbar */}
      <Row h="h-[32px]">
        <Grip />
        <div className="ml-[2px] flex h-full items-center">
          <Slot><Doc /></Slot>
          <Slot><Schema /></Slot>
          <Slot><WinDb /></Slot>
          <Slot><WinUser /></Slot>
          <Slot><SqlHeart /></Slot>
          <Slot><WinList /></Slot>
          <Sep w="w-[7px]" />
          <div className="flex h-[22px] w-[23px] items-center justify-center border border-t-[#a0a0a0] border-r-white border-b-white border-l-[#a0a0a0] bg-[#f8f8f8]">
            <WinBook />
          </div>
          <Slot><WinChat /></Slot>
          <Slot><Bolt /></Slot>
          <Sep />
          <Slot><Shapes /></Slot>
          <Slot><Head /></Slot>
          <Drop w="w-[12px]" />
          <Slot><WinCopy /></Slot>
          <Drop />
          <Slot><Gearish /></Slot>
          <Drop />
          <Sep />
          <Slot><WinTools /></Slot>
          <Sep w="w-[7px]" />
          <Slot><PlSql /></Slot>
          <Drop />
          <Slot><Play /></Slot>
          <Sep />
          <Slot><Disk /></Slot>
          <Slot><Disk up /></Slot>
          <Sep w="w-[6px]" />
          <Slot><Plug mark="star" /></Slot>
          <Drop w="w-[12px]" />
          <Slot><Plug mark="x" /></Slot>
          <Drop />
          <div className="flex h-full w-[12px] flex-col items-center justify-end pb-[6px]"><Tri /></div>
          <div className="h-full w-px bg-[#a0a0a0]" />
        </div>
        <Grip />
        <div className="ml-[2px] flex h-[21px] w-[160px] items-center justify-between border border-[#acacac] bg-linear-to-b from-[#f0f0f0] to-[#e5e5e5] pt-px pr-[4px] pl-[3px] tracking-[-0.3px]">
          &lt;No Workspace selected&gt;
          <Chev d="down" />
        </div>
        <Slot><Ws /></Slot>
        <Slot><Ws x /></Slot>
        <div className="flex h-full flex-1 flex-col items-end justify-end pr-[4px] pb-[6px]"><Tri /></div>
        <div className="h-full w-px bg-[#a0a0a0]" />
        <Grip />
        <div className="ml-[2px] flex h-[28px] w-[977px] items-center border border-[#a8a8ac] bg-white p-px">
          <div className="flex h-[24px] w-4 items-center justify-center border border-[#a0a0a0] bg-[#ececec]"><Tri w={9} /></div>
          <span className="flex-1 pl-px text-[#6d6d6d]">Search Toad World</span>
          <div className="flex h-[24px] w-6 items-center justify-center border border-[#acacac] bg-linear-to-b from-[#f0f0f0] to-[#e5e5e5]"><Lens /></div>
        </div>
        <div className="ml-[4px] h-full"><Corner /></div>
      </Row>

      {/* second toolbar */}
      <Row h="h-[26px]">
        <Grip />
        <div className="ml-[2px] flex h-full flex-1 items-center">
          <Slot><GearSave /></Slot>
          <Slot><Grey i={0} /></Slot>
          <Slot><Grey i={1} /></Slot>
          <Slot><Grey i={2} /></Slot>
          <Sep w="w-[6px]" />
          <Slot><Grey i={3} /></Slot>
          <Slot><Grey i={4} /></Slot>
          <Slot><Grey i={5} /></Slot>
          <Sep w="w-[6px]" />
          <Slot><Grey i={6} /></Slot>
          <Slot><Grey i={7} /></Slot>
          <Slot><Grey i={8} /></Slot>
          <Slot><Grey i={9} /></Slot>
          <Slot><Grey i={10} /></Slot>
          <Slot><Grey i={11} /></Slot>
        </div>
        <Corner />
      </Row>

      {/* connections */}
      <Row h="h-[28px]">
        <Grip />
        <div className="ml-[3px] flex h-[23px] w-[110px] items-center gap-[4px] border border-t-[#a0a0a0] border-r-white border-b-white border-l-[#a0a0a0] bg-[#f8f8f8] pl-[7px] tracking-[0.1px]">
          <Plug />
          <span className="pt-[2px]">DEV@VIRTORA</span>
        </div>
      </Row>

      {/* open windows */}
      <Row h="h-[30px]">
        <Grip />
        <div className="ml-[9px] flex items-center gap-[4px]"><Doc /><span className="pt-px">Editor</span></div>
        <div className="ml-[16px] flex w-[109px] items-center gap-[4px]"><Schema /><span className="pt-px tracking-[-0.28px]">Schema Browser</span></div>
        <div className="flex h-[26px] w-[88px] items-center gap-[5px] border border-t-[#a0a0a0] border-r-white border-b-white border-l-[#a0a0a0] bg-[#f8f8f8] pt-px pl-[7px]"><Toad /><span className="pt-px">Alter Table</span></div>
      </Row>

      {/* body */}
      <div className="flex h-[855px] shrink-0">
        <div className="ml-[2px] w-[22px] shrink-0 bg-white pt-[5px] shadow-[inset_0_1px_0_#f0f0f0]">
          <div className="flex h-[111px] w-[20px] flex-col items-center border-t border-r border-b border-[#8c8c8c] bg-[#f0f0f0] pt-[3px]">
            <WinBook />
            <span className="mt-[6px] pr-px tracking-[-0.1px] [writing-mode:vertical-rl]">Project Manager</span>
          </div>
        </div>

        <div className="flex w-[1894px] shrink-0 flex-col">
          <div className="h-[58px] pt-[5px] pl-[7px]">
            <div className="flex h-[21px]">
              <span className="w-[94px] pt-[5px]">Schema:</span>
              <div className="flex w-[295px] items-center justify-between border border-[#d9d9d9] pr-[4px] pl-[2px] text-[#6d6d6d] shadow-[inset_0_0_0_1px_#fff]">
                DEV
                <Chev d="down" c="#bfbfbf" />
              </div>
            </div>
            <div className="mt-[3px] flex h-[21px]">
              <span className="w-[94px] pt-[5px]">Table Name:</span>
              <div className="flex w-[295px] items-center border border-[#d9d9d9] pl-[2px] text-[#6d6d6d] shadow-[inset_0_0_0_1px_#fff]">
                <Id>YVEINE_TMDB_INTAKE_LIST_C</Id>
              </div>
            </div>
          </div>

          <div className="flex h-[46px] border-y border-l border-[#dcdcdc] pt-[9px] pl-[7px]">
            <div className="w-[125px]"><Radio on off>Standard</Radio><Radio off>Global Temporary</Radio></div>
            <div className="w-[131px]"><Radio off>Index Organized</Radio><Radio off>Clustered</Radio></div>
            <div><Radio off>Advanced Queuing</Radio><Radio off>External</Radio></div>
          </div>

          <div className="flex h-[20px] items-end pl-[2px]">
            <Tab w="w-[53px]">Columns</Tab>
            <Tab w="w-[102px]">Physical Attributes</Tab>
            <Tab w="w-[109px]">Additional Attributes</Tab>
            <Tab on w="w-[71px]">Constraints</Tab>
            <Tab w="w-[59px]">Comments</Tab>
          </div>

          <div className="flex h-[681px] flex-col border border-[#acacac] bg-white">
            <div className="flex h-[43px] items-start pl-[12px]">
              <Btn cls="mt-[12px] h-[23px] w-[87px] border-[#acacac]">Add Constraint</Btn>
              <Btn cls="mt-[12px] ml-[9px] h-[23px] w-[79px] border-[#acacac] pr-px">Rearrange</Btn>
              <div className="mt-[10px] ml-[15px] grid grid-cols-[72px_40px_97px_auto]">
                <span>Primary Key:</span><span>Yes</span><span>Check Constraints:</span><span>4</span>
                <span>Unique Keys:</span><span>0</span><span>Foreign Keys:</span><span>2</span>
              </div>
            </div>
            <div className="ml-[3px] h-px shrink-0 bg-[#a0a0a0]" />
            <div className="ml-[3px] flex h-[633px] shrink-0 overflow-hidden">
              <div className="flex h-[633px] w-[1871px] shrink-0 flex-col gap-[14px] overflow-hidden bg-[#f0f0f0] pt-[10px]">
                <Foreign />
                <Check text={'"NRDOC" IS NOT NULL'} name="SYS_C0013630" />
                <Check text={'"NRDOC1" IS NOT NULL'} name="SYS_C0013631" />
                <Check text={'"NRDOC2" IS NOT NULL'} name="SYS_C0013632" />
              </div>
              <div className="ml-px flex w-[15px] flex-col items-center bg-[#f0f0f0]">
                <div className="flex h-[17px] items-center"><Chev d="up" /></div>
                <div className="h-[287px] w-full bg-[#cdcdcd]" />
                <div className="mt-auto flex h-[17px] items-center"><Chev d="down" /></div>
              </div>
            </div>
          </div>

          <div className="flex h-[33px] pt-[6px] pr-[5px] pl-[9px]">
            <Btn cls="h-[23px] w-[73px] border-[#acacac] pr-[2px]">Show SQL</Btn>
            <Btn cls="ml-[7px] h-[23px] w-[73px] border-[#acacac] tracking-[0.1px] pr-px">Schedule...</Btn>
            <div className="flex-1" />
            <Btn cls="h-[23px] w-[73px] border-[#3399ff] pr-[2px]">OK</Btn>
            <Btn cls="ml-[7px] h-[23px] w-[73px] border-[#acacac] pr-[2px]">Cancel</Btn>
          </div>
          <div className="flex gap-[3px]">
            <Cell w="w-[201px]"><span className="pl-px tracking-[0.1px]">DEV@VIRTORA</span></Cell>
            <Cell w="w-[1537px]" />
            <Cell w="w-[150px]" />
          </div>
        </div>
        <div className="h-[805px] w-px bg-[#a0a0a0]" />
      </div>

      {/* status bar */}
      <div className="flex h-[20px] shrink-0 gap-[3px] border-b border-white pt-[2px]">
        <Cell w="w-[129px]">
          <svg width="12" height="12" viewBox="0 0 12 12" className="mr-[5px] ml-[3px] block">
            <path d="M4 .5h4L11.500 4v4L8 11.500H4L.5 8V4z" fill="#e80000" stroke="#111" strokeDasharray="2 1" />
            <circle cx="4.5" cy="4" r="1" fill="#ff9d9d" />
          </svg>
          AutoCommit is OFF
        </Cell>
        <Cell w="w-[31px]"><span className="w-full pr-px text-center text-[#a0a0a0]">CAPS</span></Cell>
        <Cell w="w-[27px]"><span className="w-full pr-px text-center">NUM</span></Cell>
        <Cell w="w-[27px]"><span className="w-full pr-px text-center text-[#a0a0a0]">INS</span></Cell>
        <Cell w="w-[1514px]" />
        <Cell w="w-[21px]">
          <svg width="12" height="11" viewBox="0 0 12 11" className="mx-auto block" fill="none">
            <path d="M1 6v3.500h10V6" stroke="#0a9a0a" strokeWidth="2" />
            <path d="M5 0h2v4h2L6 7.500 3 4h2z" fill="#000080" />
          </svg>
        </Cell>
        <Cell w="w-[151px]" />
      </div>

      {/* taskbar */}
      <div className="relative isolate flex h-[40px] shrink-0 items-center font-['Open_Sans',sans-serif] tracking-normal">
        <Wallpaper />
        <div className="flex w-[64px] justify-center pr-[10px]">
          <svg width="28" height="28" viewBox="0 0 28 28" fill="#fff">
            <path d="M0 4 12 2.200V13H0zM13.500 2 28 0v13H13.500zM0 14.500h12v11L0 24zM13.500 14.500H28V28l-14.500-2z" />
          </svg>
        </div>
        {TASKS.map((T, i) => (
          <div key={i} className="flex w-[62px] shrink-0 justify-center">
            <T />
          </div>
        ))}
        <div className="mt-px mr-[1px] flex h-[38px] w-[60px] items-center justify-center border border-[#c3c0b4] bg-[#ffffff40]"><VBox /></div>
        <div className="mt-px ml-[1px] flex h-[38px] w-[59px] items-center justify-center border border-white bg-[#ffffff66]"><BigToad /></div>
        <div className="ml-auto flex items-center text-[12px] text-white">
          <svg width="8" height="4" viewBox="0 0 8 4" className="mr-[13px] block"><path d="M4 0l4 4H0z" fill="#fff" /></svg>
          <div className="mr-[8px] flex size-4 items-center justify-center bg-[#8b0000] text-[11px] leading-none">En</div>
          <Svg>
            <circle cx="8" cy="8" r="8" fill="#dff2f8" />
            <circle cx="8" cy="8" r="5.5" fill="#28a9cf" />
            <circle cx="8" cy="8" r="2.6" fill="#114d66" />
            <circle cx="7" cy="6.5" r="1" fill="#fff" />
          </Svg>
          <div className="ml-[8px]">
            <Svg>
              <path d="M1.5 1v15" stroke="#fff" strokeWidth="1.6" />
              <path d="M3 2c3-1 4 0 6 1s4 1 6 .5L13 9c-2 .5-3-.5-5-1s-3-1-5 0z" fill="#fff" stroke="#444" strokeWidth=".5" />
            </Svg>
          </div>
          <div className="ml-[8px]">
            <Svg>
              <path d="M5.500 3.500h10V11h-10zM8 14.500h6m-3-3v3" stroke="#fff" strokeWidth="1.3" />
              <path d="M1 1.500h4v4H1zM3 5.500V14h3" stroke="#fff" strokeWidth="1.2" />
            </Svg>
          </div>
          <div className="ml-[8px]">
            <Svg>
              <path d="M1 5.500h2.500L7.500 2v12l-4-3.500H1z" fill="#fff" />
              <path d="M9.500 5.500c1 1.500 1 3.500 0 5M11.500 4c2 2.500 2 5.500 0 8M13.500 2.500c2.500 3.500 2.500 7.500 0 11" stroke="#fff" />
            </Svg>
          </div>
          <span className="ml-[14px] w-[40px] text-[11px]">ENG</span>
          <div className="mr-[19px] flex w-[54px] flex-col items-center pt-[2px] text-[10.7px] leading-[17px]">
            <span>14:28</span>
            <span>01.10.2013</span>
          </div>
        </div>
      </div>

      {/* mouse pointer */}
      <svg width="12" height="19" viewBox="0 0 12 19" className="absolute top-[413px] left-[603px]">
        <path d="M.5.700v15.500l3.600-3.400 2.400 5.500 2.200-1-2.400-5.300h5z" fill="#fff" stroke="#000" />
      </svg>
    </div>
  );
}
